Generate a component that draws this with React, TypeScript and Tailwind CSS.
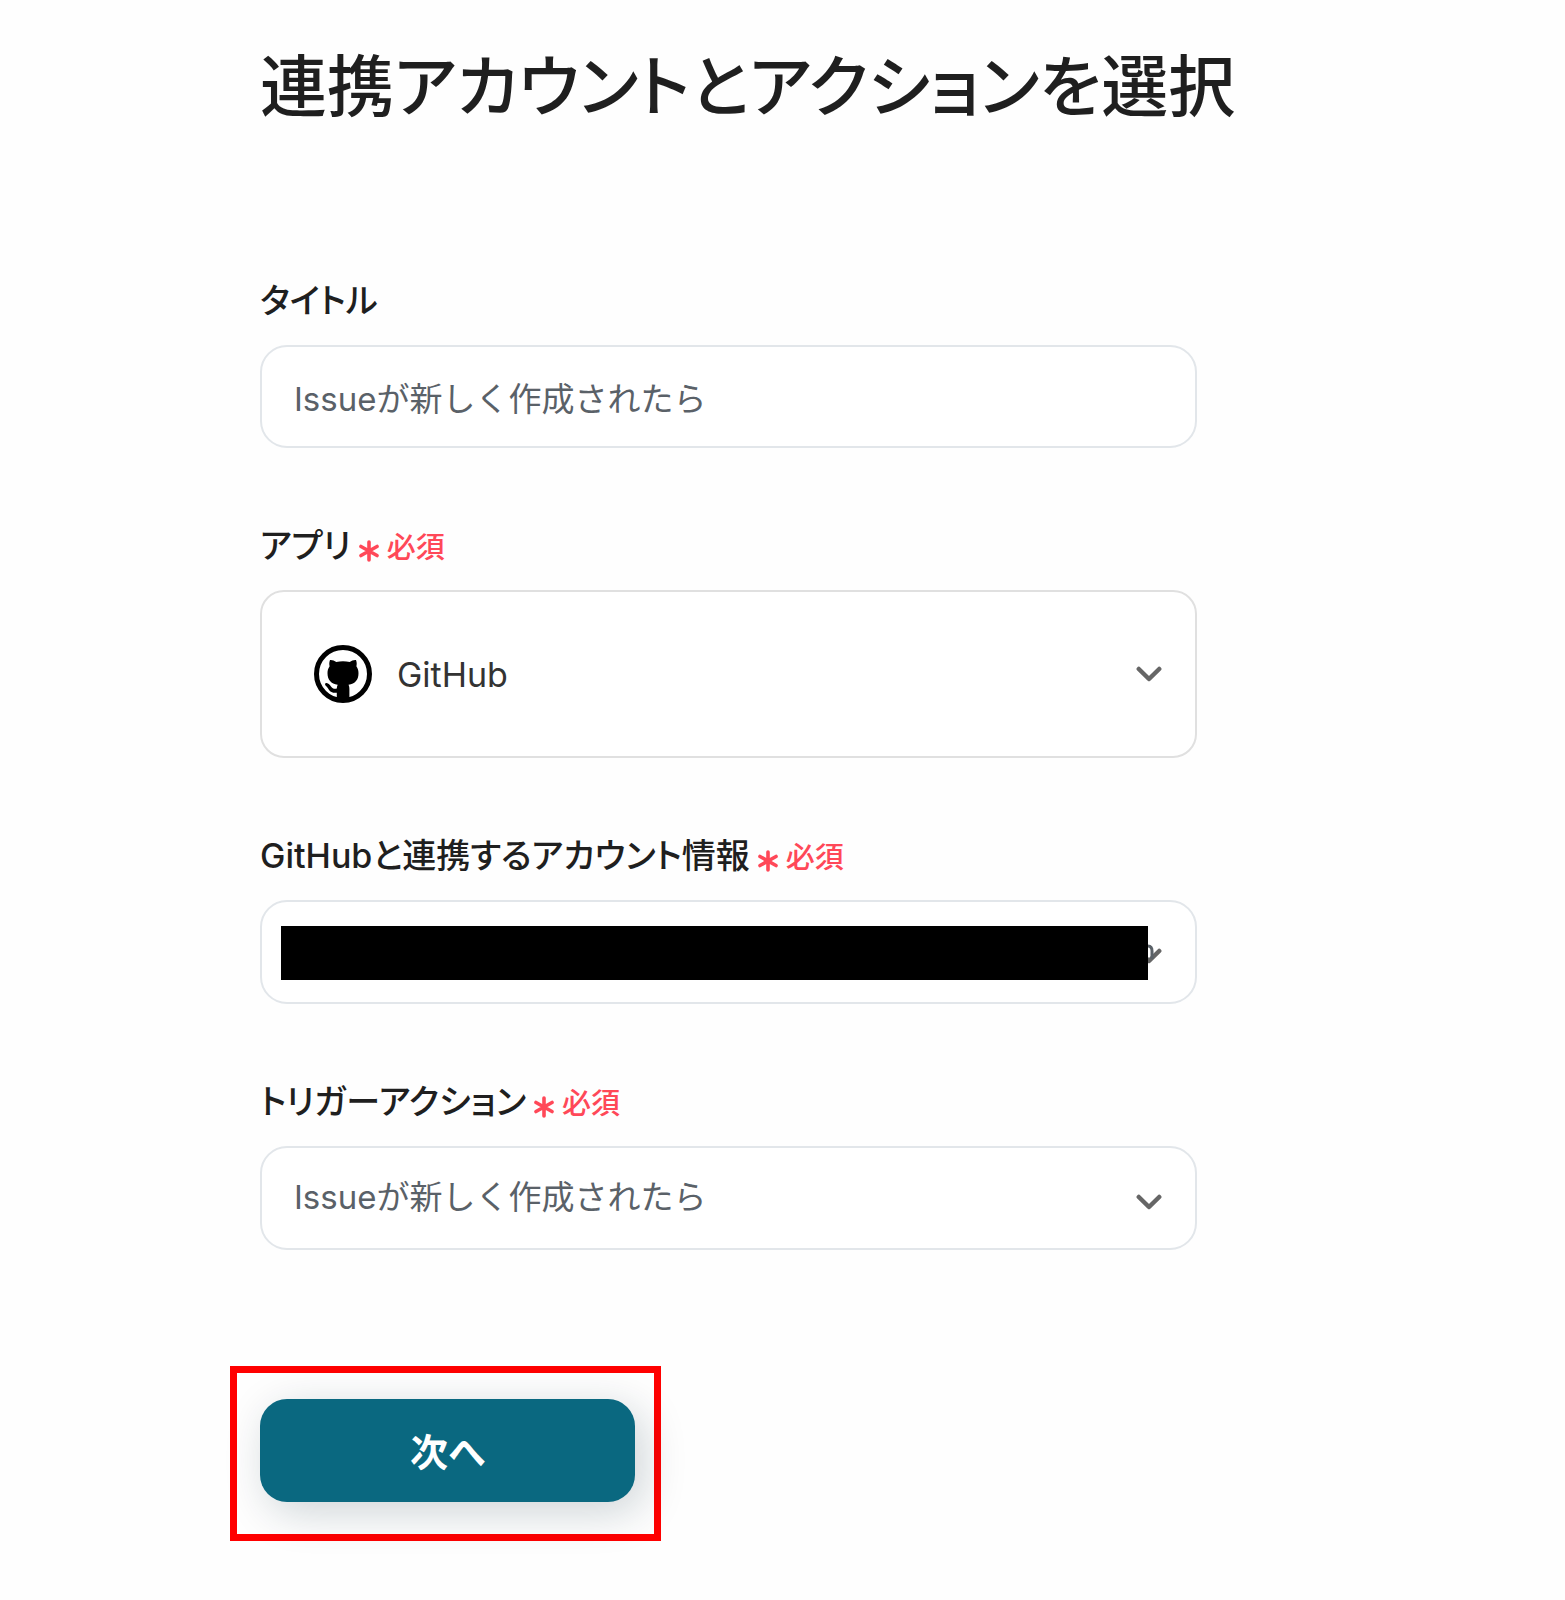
import type { ReactNode } from "react";

const control =
  "block w-full appearance-none rounded-[27px] border-2 border-[#e2e6ea] bg-white pl-8 text-[33px] text-[#5a6168] outline-none";

const Required = () => (
  <span className="ml-2 text-[29px] text-[#ff4858]">
    <svg
      viewBox="0 0 20 22"
      className="mr-2 inline-block h-[22px] w-5 align-[-4px]"
      fill="none"
      stroke="currentColor"
      strokeWidth="3.6"
      strokeLinecap="round"
      aria-hidden="true"
    >
      <path d="M10 2v18M2 6.500l16 9M18 6.500l-16 9" />
    </svg>
    必須
  </span>
);

const Field = ({
  id,
  label,
  required,
  children,
}: {
  id: string;
  label: string;
  required?: boolean;
  children: ReactNode;
}) => (
  <div className="flex flex-col gap-5">
    <label
      htmlFor={id}
      className="h-12 text-[34px] leading-[48px] font-medium whitespace-nowrap text-[#1f1f1f] [font-feature-settings:'palt']"
    >
      {label}
      {required && <Required />}
    </label>
    <div className="relative">{children}</div>
  </div>
);

const Chevron = ({ className = "top-0" }: { className?: string }) => (
  <svg
    viewBox="0 0 26 16"
    className={`pointer-events-none absolute right-[35px] bottom-0 my-auto h-4 w-[26px] ${className}`}
    fill="none"
    stroke="#666"
    strokeWidth="4.5"
    strokeLinecap="round"
    strokeLinejoin="round"
    aria-hidden="true"
  >
    <path d="M2.800 3 13 13 23.200 3" />
  </svg>
);

const GitHubMark = () => (
  <svg
    viewBox="0 0 58 58"
    className="pointer-events-none absolute inset-y-0 left-[54px] my-auto size-[58px]"
    aria-hidden="true"
  >
    <circle cx="29" cy="29" r="26.5" fill="none" stroke="#000" strokeWidth="5" />
    <path d="M16 15c2.200-.2 4.300 .5 6.300 2 4.200-.9 9.200-.9 13.400 0 2-1.500 4.100-2.200 6.300-2 .9 2.200 .9 4.300 .4 6.300 1.500 2.200 2.100 4.200 2.100 7 0 6.500-3.300 10.500-10 11.500.7 1.200 .9 2.500 .9 4.300V55H22.800V47.700c-3.800 .4-6.200-.5-7.900-3-1.100-1.700-1.800-3-3.400-4.200-1-1.500-.3-2.700 1.100-2.500 2 .3 3.200 1.800 4.400 3.500 1.400 2 3.200 2.600 5.800 2.100 .1-1.500 .3-2.700 .9-3.800-6.700-1-10.200-5-10.200-11.500 0-2.800 .6-4.800 2.100-7-.5-2-.5-4.100 .4-6.300z" />
  </svg>
);

export default function App() {
  return (
    <main className="min-h-screen bg-[#fefefe] pt-10 pb-14 pl-[260px] font-['Inter','Noto_Sans_CJK_JP',sans-serif]">
      <h1 className="text-[67px] leading-[94px] font-medium whitespace-nowrap text-[#1f1f1f] [font-feature-settings:'palt']">
        連携アカウントとアクションを選択
      </h1>

      <form
        className="mt-[143px] w-full max-w-[937px]"
        onSubmit={(e) => e.preventDefault()}
      >
        <div className="flex flex-col gap-[74px]">
          <Field id="title" label="タイトル">
            <input
              id="title"
              type="text"
              defaultValue="Issueが新しく作成されたら"
              className={`${control} h-[103px]`}
            />
          </Field>

          <Field id="app" label="アプリ" required>
            <select
              id="app"
              className="block h-[168px] w-full appearance-none rounded-[24px] border-2 border-[#e0e0e0] bg-white pl-[135px] text-[34px] text-[#333] outline-none"
            >
              <option>GitHub</option>
            </select>
            <GitHubMark />
            <Chevron />
          </Field>

          <Field
            id="account"
            label="GitHubと連携するアカウント情報"
            required
          >
            <select id="account" className={`${control} h-[104px]`}>
              <option></option>
            </select>
            <Chevron className="top-2" />
            {/* last letter of the account name, cut off by the mask */}
            <svg
              viewBox="0 0 6 16"
              className="pointer-events-none absolute inset-y-0 right-[43px] my-auto h-4 w-[6px]"
              fill="none"
              stroke="#5a6168"
              strokeWidth="3"
              aria-hidden="true"
            >
              <path d="M0 2c3 .2 4 2 4 5V15" />
            </svg>
            <div className="absolute top-[26px] right-[49px] bottom-6 left-[21px] bg-black" />
          </Field>

          <Field id="trigger" label="トリガーアクション" required>
            <select id="trigger" className={`${control} h-[104px]`}>
              <option>Issueが新しく作成されたら</option>
            </select>
            <Chevron className="top-2" />
          </Field>
        </div>

        <div className="mt-[116px] -ml-[30px] w-fit border-[7px] border-[#ff0000] pt-[26px] pr-[19px] pb-8 pl-[23px]">
          <button
            type="submit"
            className="block h-[103px] w-[375px] rounded-[27px] bg-[#0a6880] pt-1 text-[38px] font-bold text-white shadow-[8px_10px_44px_rgba(10,40,55,0.2)] [font-feature-settings:'palt']"
          >
            次へ
          </button>
        </div>
      </form>
    </main>
  );
}
